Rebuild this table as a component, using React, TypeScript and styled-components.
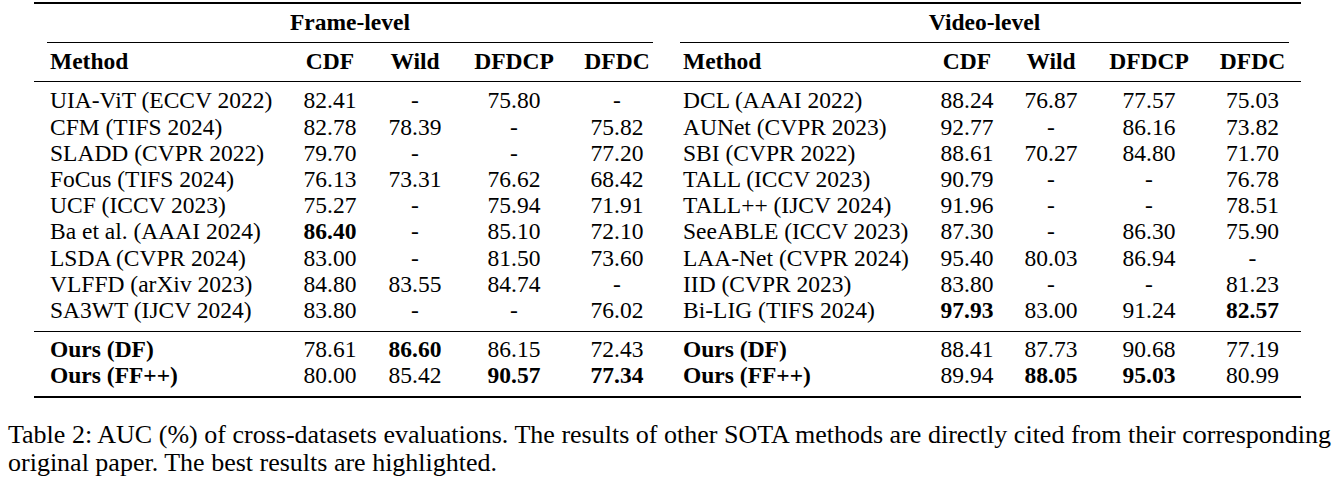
import React from "react";
import styled, { createGlobalStyle } from "styled-components";

const Global = createGlobalStyle`
  html, body { margin: 0; padding: 0; background: #fff; }
  body { font-family: "Liberation Serif", "Times New Roman", serif; color: #000; }
`;

const COLS = "254px 84px 86px 112px 94px 262px 82px 86px 110px 97px";
const FS = "23.5px";

const Page = styled.div`
  width: 1336px;
  height: 481px;
  padding-top: 2px;
  box-sizing: border-box;
  overflow: hidden;
`;

const Table = styled.div`
  margin-left: 34px;
  width: 1267px;
  border-top: 2px solid #000;
  border-bottom: 2px solid #000;
  font-size: ${FS};
`;

const GridRow = styled.div<{ $h: number; $rule?: boolean; $padBottom?: number }>`
  display: grid;
  grid-template-columns: ${COLS};
  height: ${(p) => p.$h}px;
  box-sizing: border-box;
  padding-bottom: ${(p) => p.$padBottom ?? 0}px;
  border-bottom: ${(p) => (p.$rule ? "1px solid #000" : "none")};
  align-items: center;
`;

const GroupCell = styled.div<{ $start: number; $ml: number; $mr: number }>`
  grid-column: ${(p) => p.$start} / span 5;
  margin-left: ${(p) => p.$ml}px;
  margin-right: ${(p) => p.$mr}px;
  align-self: stretch;
  display: flex;
  align-items: center;
  justify-content: center;
  border-bottom: 1px solid #000;
  font-weight: bold;
  line-height: 1;
`;

const Cell = styled.div<{ $method?: boolean; $pad?: number; $bold?: boolean }>`
  text-align: ${(p) => (p.$method ? "left" : "center")};
  padding-left: ${(p) => (p.$method ? p.$pad ?? 0 : 0)}px;
  font-weight: ${(p) => (p.$bold ? "bold" : "normal")};
  white-space: nowrap;
  line-height: 26.2px;
`;

const Section = styled.div<{ $top: number; $bottom: number; $rule?: boolean }>`
  padding-top: ${(p) => p.$top}px;
  padding-bottom: ${(p) => p.$bottom}px;
  border-bottom: ${(p) => (p.$rule ? "1px solid #000" : "none")};
`;

const DataRow = styled.div`
  display: grid;
  grid-template-columns: ${COLS};
  height: 26.2px;
  align-items: center;
`;

const Caption = styled.div`
  margin-top: 23px;
  margin-left: 8px;
  width: 1323px;
  font-size: 26px;
  line-height: 28px;
`;

const CaptionLine = styled.div<{ $justify?: boolean }>`
  white-space: ${(p) => (p.$justify ? "normal" : "nowrap")};
  text-align: ${(p) => (p.$justify ? "justify" : "left")};
  text-align-last: ${(p) => (p.$justify ? "justify" : "left")};
`;

type V = string; // "*" prefix = bold
type Row = { l: string; lv: V[]; r: string; rv: V[]; bold?: boolean };

const rows: Row[] = [
  { l: "UIA-ViT (ECCV 2022)", lv: ["82.41", "-", "75.80", "-"], r: "DCL (AAAI 2022)", rv: ["88.24", "76.87", "77.57", "75.03"] },
  { l: "CFM (TIFS 2024)", lv: ["82.78", "78.39", "-", "75.82"], r: "AUNet (CVPR 2023)", rv: ["92.77", "-", "86.16", "73.82"] },
  { l: "SLADD (CVPR 2022)", lv: ["79.70", "-", "-", "77.20"], r: "SBI (CVPR 2022)", rv: ["88.61", "70.27", "84.80", "71.70"] },
  { l: "FoCus (TIFS 2024)", lv: ["76.13", "73.31", "76.62", "68.42"], r: "TALL (ICCV 2023)", rv: ["90.79", "-", "-", "76.78"] },
  { l: "UCF (ICCV 2023)", lv: ["75.27", "-", "75.94", "71.91"], r: "TALL++ (IJCV 2024)", rv: ["91.96", "-", "-", "78.51"] },
  { l: "Ba et al. (AAAI 2024)", lv: ["*86.40", "-", "85.10", "72.10"], r: "SeeABLE (ICCV 2023)", rv: ["87.30", "-", "86.30", "75.90"] },
  { l: "LSDA (CVPR 2024)", lv: ["83.00", "-", "81.50", "73.60"], r: "LAA-Net (CVPR 2024)", rv: ["95.40", "80.03", "86.94", "-"] },
  { l: "VLFFD (arXiv 2023)", lv: ["84.80", "83.55", "84.74", "-"], r: "IID (CVPR 2023)", rv: ["83.80", "-", "-", "81.23"] },
  { l: "SA3WT (IJCV 2024)", lv: ["83.80", "-", "-", "76.02"], r: "Bi-LIG (TIFS 2024)", rv: ["*97.93", "83.00", "91.24", "*82.57"] },
];

const ours: Row[] = [
  { l: "Ours (DF)", lv: ["78.61", "*86.60", "86.15", "72.43"], r: "Ours (DF)", rv: ["88.41", "87.73", "90.68", "77.19"], bold: true },
  { l: "Ours (FF++)", lv: ["80.00", "85.42", "*90.57", "*77.34"], r: "Ours (FF++)", rv: ["89.94", "*88.05", "*95.03", "80.99"], bold: true },
];

const Val = ({ v }: { v: V }) =>
  v.startsWith("*") ? <Cell $bold>{v.slice(1)}</Cell> : <Cell>{v}</Cell>;

const renderRow = (r: Row, i: number) => (
  <DataRow key={i}>
    <Cell $method $pad={16} $bold={r.bold}>{r.l}</Cell>
    {r.lv.map((v, j) => <Val key={"l" + j} v={v} />)}
    <Cell $method $pad={19} $bold={r.bold}>{r.r}</Cell>
    {r.rv.map((v, j) => <Val key={"r" + j} v={v} />)}
  </DataRow>
);

const heads = ["CDF", "Wild", "DFDCP", "DFDC"];

export default function App() {
  return (
    <Page>
      <Global />
      <Table>
        <GridRow $h={39}>
          <GroupCell $start={1} $ml={13} $mr={11}>Frame-level</GroupCell>
          <GroupCell $start={6} $ml={16} $mr={12}>Video-level</GroupCell>
        </GridRow>
        <GridRow $h={39} $rule $padBottom={2}>
          <Cell $method $pad={16} $bold>Method</Cell>
          {heads.map((h) => <Cell key={"hl" + h} $bold>{h}</Cell>)}
          <Cell $method $pad={19} $bold>Method</Cell>
          {heads.map((h) => <Cell key={"hr" + h} $bold>{h}</Cell>)}
        </GridRow>
        <Section $top={5.4} $bottom={7.5} $rule>
          {rows.map(renderRow)}
        </Section>
        <Section $top={4.2} $bottom={7.7}>
          {ours.map(renderRow)}
        </Section>
      </Table>
      <Caption>
        <CaptionLine $justify>
          Table 2: AUC (%) of cross-datasets evaluations. The results of other SOTA methods are directly cited from their corresponding
        </CaptionLine>
        <CaptionLine>original paper. The best results are highlighted.</CaptionLine>
      </Caption>
    </Page>
  );
}
